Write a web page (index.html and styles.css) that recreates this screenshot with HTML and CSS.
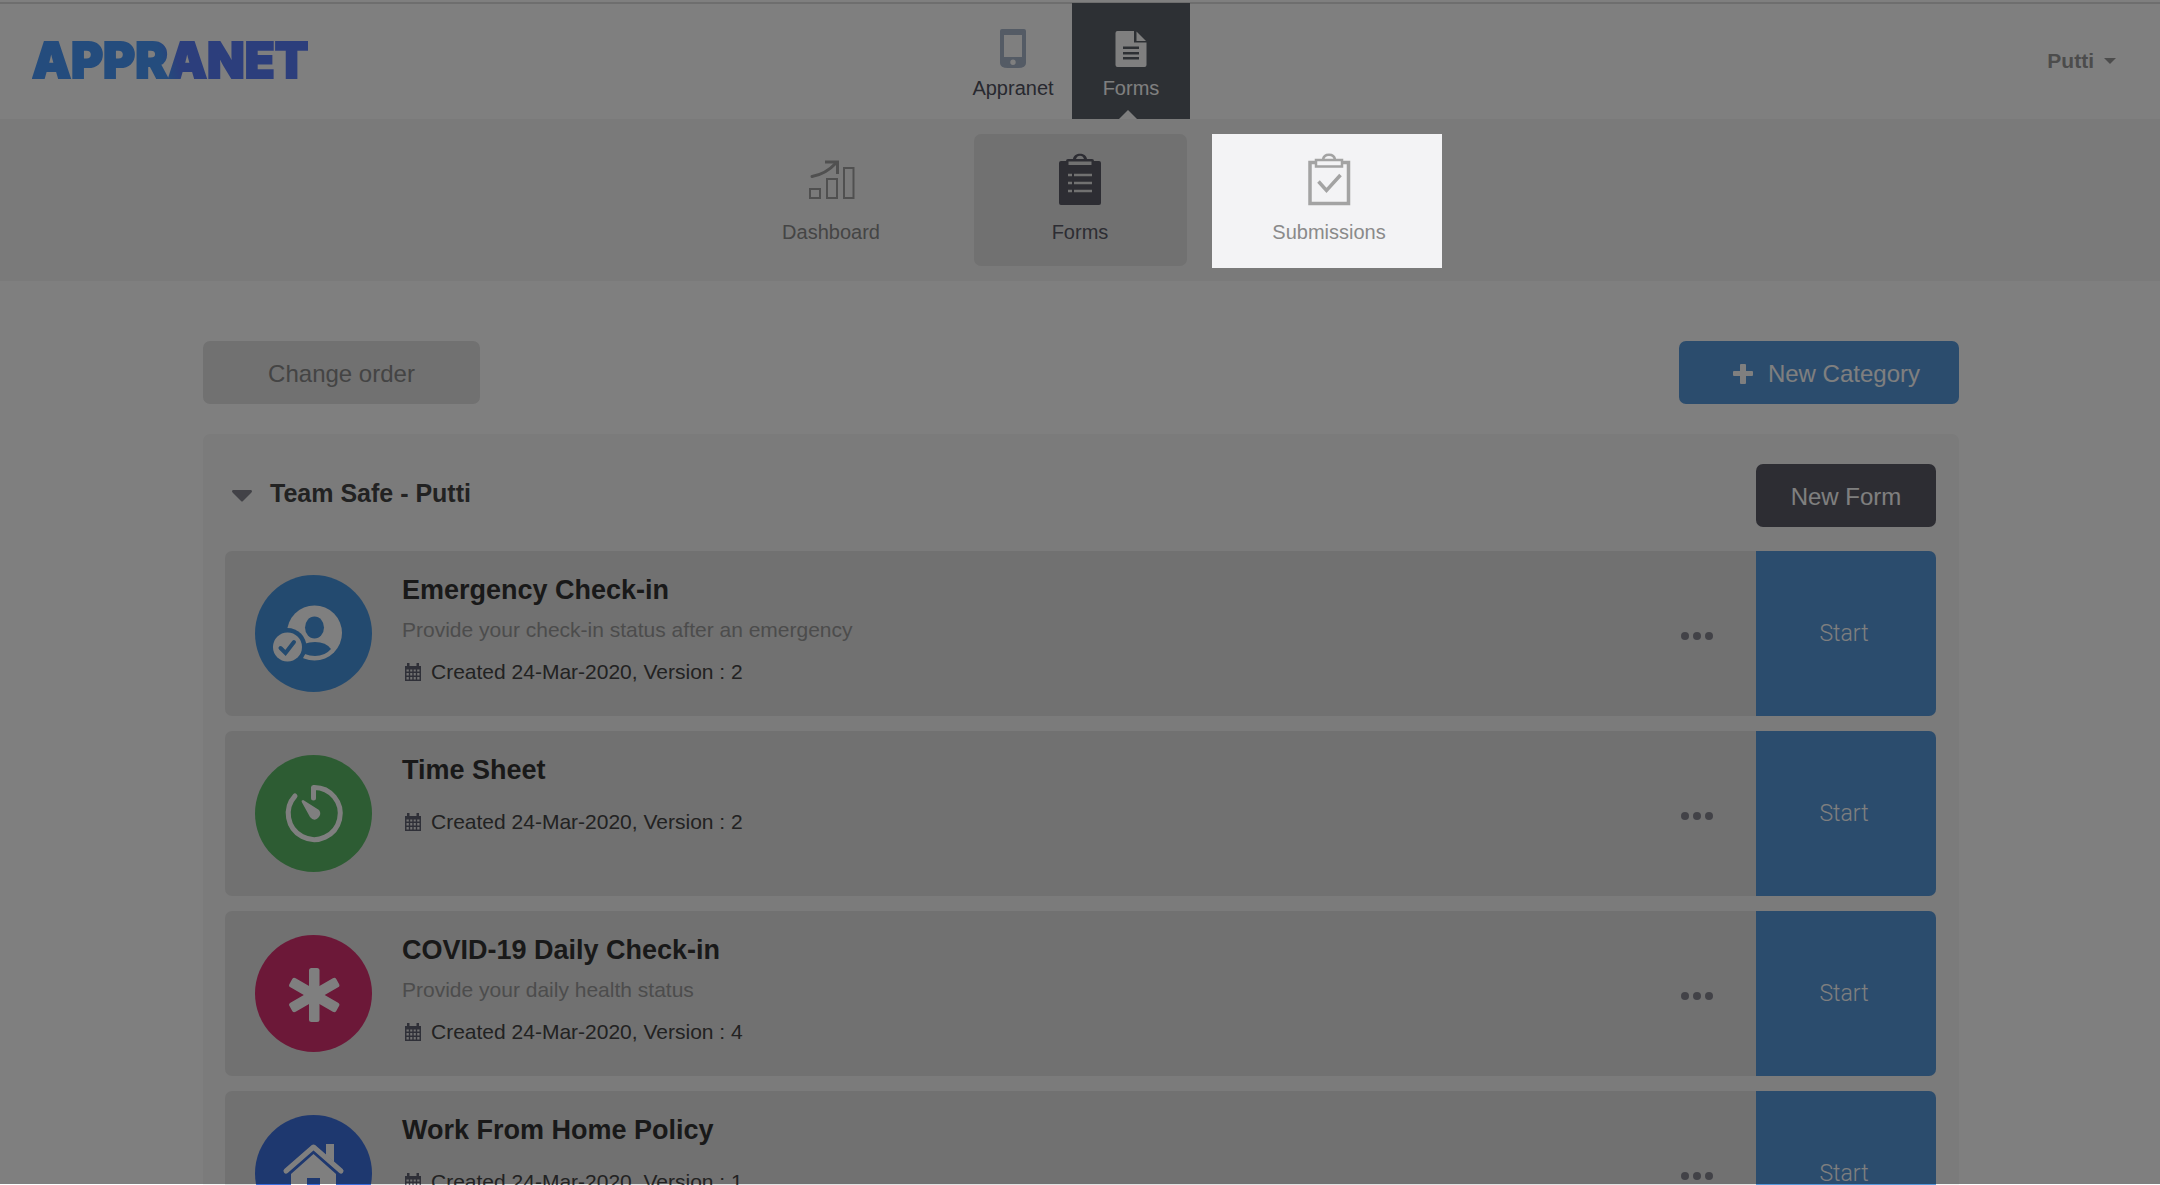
FILE: index.html
```
<!DOCTYPE html>
<html lang="en">

<head>
    <meta charset="utf-8">
    <title>Appranet - Forms</title>
    <link rel="stylesheet" href="styles.css">
</head>

<body>
    <svg class="sprite" aria-hidden="true">
        <symbol id="calendar" viewBox="0 0 16 18">
            <path fill="currentColor" fill-rule="evenodd" d="M0 3h2V0h2.500v3h7V0H14v3h2v15H0zM1.500 6.500v2h2.300v-2zm3.700 0v2h2.100v-2zm3.500 0v2h2.100v-2zm3.500 0v2h2.300v-2zM1.500 10v2.500h2.300V10zm3.700 0v2.500h2.100V10zm3.500 0v2.500h2.100V10zm3.500 0v2.500h2.300V10zM1.500 14v2.500h2.300V14zm3.700 0v2.500h2.100V14zm3.500 0v2.500h2.100V14zm3.500 0v2.500h2.300V14z" />
        </symbol>
        <symbol id="dots" viewBox="0 0 32 8">
            <g fill="currentColor">
                <circle cx="4" cy="4" r="4" />
                <circle cx="16" cy="4" r="4" />
                <circle cx="28" cy="4" r="4" />
            </g>
        </symbol>
    </svg>

    <header class="topbar">
        <a class="logo" href="#"><span class="logo-text">APPRANET</span></a>
        <nav class="apps">
            <a class="app" href="#">
                <svg class="app-icon" viewBox="0 0 26 40">
                    <path fill="#a8b6cb" fill-rule="evenodd" d="M2 0h22a2 2 0 0 1 2 2v32q0 5-8 5H8q-8 0-8-5V2a2 2 0 0 1 2-2zm2 6v22h18V6zm9 24.500a2.700 2.700 0 1 0 0 5.400 2.700 2.700 0 0 0 0-5.400z" />
                </svg>
                Appranet
            </a>
            <a class="app app-active" href="#">
                <svg class="app-icon" viewBox="0 0 32 40">
                    <path fill="#fff" fill-rule="evenodd" d="M2.500 2H19v11.500h12.500V36a2 2 0 0 1-2 2h-27a2 2 0 0 1-2-2V4a2 2 0 0 1 2-2zM8 17.500v2.500h16v-2.500zM8 23v2.500h16V23zm0 5v2.500h16V28z" />
                    <path fill="#fff" d="M21.500 2.500 31 12h-9.500z" />
                </svg>
                Forms
            </a>
        </nav>
        <button class="user" type="button">Putti
            <svg class="user-caret" viewBox="0 0 12 6"><path fill="currentColor" d="M0 0h12L6 6z" /></svg>
        </button>
    </header>

    <nav class="subnav">
        <a class="tile" href="#">
            <svg class="tile-icon" viewBox="0 0 48 56" fill="none" stroke="#a0a0a0" stroke-width="2">
                <path d="M3 36h10v9H3zM20 26h10v19H20zM37 15h9.500v30H37z" />
                <path stroke-width="3" stroke-linecap="round" d="M5 23.500Q19 21 29 10" />
                <path stroke-width="3" d="M18 9h12.500v12" />
            </svg>
            Dashboard
        </a>
        <a class="tile tile-active" href="#">
            <svg class="tile-icon" viewBox="0 0 48 56">
                <path fill="#5a5a66" d="M5 8h5q0-2 2-2h5c1-7 13-7 14 0h5q2 0 2 2h5a2 2 0 0 1 2 2v40a2 2 0 0 1-2 2H5a2 2 0 0 1-2-2V10a2 2 0 0 1 2-2z" />
                <path fill="#e2e2e2" d="M12.500 8.500h23V12h-23zM20 6c1-4.500 7-4.500 8 0z" />
                <path stroke="#e2e2e2" stroke-width="2.500" d="M18 22h18M18 30h18M18 38h18M12 22h4M12 30h4M12 38h4" />
            </svg>
            Forms
        </a>
        <a class="tile tile-spot" href="#">
            <svg class="tile-icon" viewBox="0 0 48 56" fill="none" stroke="#a3a3a3">
                <path stroke-width="3.500" d="M10 9.500H5v41h38.500v-41H38" />
                <path stroke-width="2.500" d="M18 6.500c1-6.500 11-6.500 12 0M11 7h26v6.500H11z" />
                <path stroke-width="3.500" d="M13.500 28.500l8 9 14-15.500" />
            </svg>
            Submissions
        </a>
    </nav>

    <main class="content">
        <div class="toolbar">
            <button class="btn btn-grey" type="button">Change order</button>
            <button class="btn btn-blue" type="button">
                <svg class="plus" viewBox="0 0 20 20"><path fill="currentColor" d="M7 1q0-1 1-1h4q1 0 1 1v6h6q1 0 1 1v3q0 1-1 1h-6v7q0 1-1 1H8q-1 0-1-1v-7H1q-1 0-1-1V8q0-1 1-1h6z" /></svg>
                New Category
            </button>
        </div>

        <section class="panel">
            <div class="panel-head">
                <svg class="panel-caret" viewBox="0 0 20 12"><path fill="#84858f" d="M1 0h18q2 1 0 3l-8 8q-1 1-2 0L1 3q-2-2 0-3z" /></svg>
                <h2 class="panel-title">Team Safe - Putti</h2>
                <button class="btn btn-dark" type="button">New Form</button>
            </div>

            <article class="form-row">
                <svg class="form-icon" viewBox="0 0 117 117">
                    <circle cx="58.500" cy="58.500" r="58.500" fill="#4795de" />
                    <circle cx="59.500" cy="58" r="27.500" fill="#fff" />
                    <ellipse cx="59.500" cy="52.500" rx="9.500" ry="11" fill="#4795de" />
                    <path fill="#4795de" d="M43 74q5-7 17-7 11 0 16 7-6 7-16 7-11 0-17-7z" />
                    <circle cx="32.500" cy="72" r="19" fill="#4795de" />
                    <circle cx="32.500" cy="72" r="14.500" fill="#fff" />
                    <path fill="none" stroke="#4795de" stroke-width="4" stroke-linecap="round" d="M25.500 73l5 5 8.500-11" />
                </svg>
                <div class="form-info">
                    <h3 class="form-title">Emergency Check-in</h3>
                    <p class="form-desc">Provide your check-in status after an emergency</p>
                    <p class="form-meta"><svg class="calendar"><use href="#calendar" /></svg>Created 24-Mar-2020, Version : 2</p>
                </div>
                <button class="more" type="button" aria-label="More"><svg class="dots"><use href="#dots" /></svg></button>
                <button class="start" type="button">Start</button>
            </article>

            <article class="form-row">
                <svg class="form-icon" viewBox="0 0 117 117">
                    <circle cx="58.500" cy="58.500" r="58.500" fill="#5ab866" />
                    <path fill="none" stroke="#fff" stroke-width="5" stroke-linecap="round" stroke-linejoin="round" d="M58.500 43V32.500A26 26 0 1 1 40 41" />
                    <path fill="#fff" d="M47 45.500q-1 0 0 2L55 62q4 5 8 1t1-8L49 45.500q-1-1-2 0z" />
                </svg>
                <div class="form-info">
                    <h3 class="form-title">Time Sheet</h3>
                    <p class="form-meta"><svg class="calendar"><use href="#calendar" /></svg>Created 24-Mar-2020, Version : 2</p>
                </div>
                <button class="more" type="button" aria-label="More"><svg class="dots"><use href="#dots" /></svg></button>
                <button class="start" type="button">Start</button>
            </article>

            <article class="form-row">
                <svg class="form-icon" viewBox="0 0 117 117">
                    <circle cx="58.500" cy="58.500" r="58.500" fill="#d83070" />
                    <g fill="#fff">
                        <rect x="54" y="33" width="10.500" height="54" rx="2.500" />
                        <rect x="54" y="33" width="10.500" height="54" rx="2.500" transform="rotate(60 59.250 60)" />
                        <rect x="54" y="33" width="10.500" height="54" rx="2.500" transform="rotate(120 59.250 60)" />
                    </g>
                </svg>
                <div class="form-info">
                    <h3 class="form-title">COVID-19 Daily Check-in</h3>
                    <p class="form-desc">Provide your daily health status</p>
                    <p class="form-meta"><svg class="calendar"><use href="#calendar" /></svg>Created 24-Mar-2020, Version : 4</p>
                </div>
                <button class="more" type="button" aria-label="More"><svg class="dots"><use href="#dots" /></svg></button>
                <button class="start" type="button">Start</button>
            </article>

            <article class="form-row">
                <svg class="form-icon" viewBox="0 0 117 117">
                    <circle cx="58.500" cy="58.500" r="58.500" fill="#3d70de" />
                    <path fill="none" stroke="#fff" stroke-width="5" stroke-linecap="round" stroke-linejoin="round" d="M31 56l27.500-24L86 56" />
                    <path fill="#fff" d="M71 29h8v18l-8-7zM36 59l22.500-20L81 59v25H65V63H52v21H36z" />
                </svg>
                <div class="form-info">
                    <h3 class="form-title">Work From Home Policy</h3>
                    <p class="form-meta"><svg class="calendar"><use href="#calendar" /></svg>Created 24-Mar-2020, Version : 1</p>
                </div>
                <button class="more" type="button" aria-label="More"><svg class="dots"><use href="#dots" /></svg></button>
                <button class="start" type="button">Start</button>
            </article>
        </section>
    </main>

    <div class="overlay"></div>
</body>

</html>
```
FILE: styles.css
```
* {
    box-sizing: border-box;
}
body {
    margin: 0;
    height: 100vh;
    overflow: hidden;
    background: #fff;
    font-family: "Liberation Sans", Arial, sans-serif;
    color: #444;
}
a {
    color: inherit;
    text-decoration: none;
}
button {
    border: none;
    background: none;
    padding: 0;
    font-family: inherit;
    color: inherit;
    cursor: pointer;
}
h2, h3, p {
    margin: 0;
}
svg {
    display: block;
}
.sprite {
    display: none;
}

/* top bar */
.topbar {
    height: 119px;
    display: grid;
    grid-template-columns: 1fr auto 1fr;
    padding: 3px 44px 0 28px;
    box-shadow: inset 0 2px 0 #fff, inset 0 4px 0 #dcdcdc;
}
.logo {
    align-self: center;
    justify-self: start;
    padding-left: 4px;
}
.logo-text {
    font-family: Inter, sans-serif;
    font-size: 49px;
    line-height: 60px;
    font-weight: 900;
    color: transparent;
    background: linear-gradient(75deg, #4898fa 47%, #587cf8 53%);
    background-clip: text;
    -webkit-background-clip: text;
    -webkit-text-stroke: 2px transparent;
}
.apps {
    display: flex;
    justify-content: center;
}
.app {
    position: relative;
    width: 118px;
    display: flex;
    flex-direction: column;
    align-items: center;
    gap: 7px;
    padding-top: 26px;
    font-size: 20px;
    line-height: 24px;
    color: #50525f;
}
.app-icon {
    height: 40px;
}
.app-active {
    background: #5a6068;
    color: #fff;
}
.app-active::after {
    content: "";
    position: absolute;
    bottom: 0;
    left: 47px;
    border: 9px solid transparent;
    border-top: none;
    border-bottom-color: #fff;
}
.user {
    justify-self: end;
    display: flex;
    align-items: center;
    gap: 10px;
    font-size: 21px;
    font-weight: bold;
    color: #999;
}
.user-caret {
    width: 12px;
    height: 6px;
}

/* sub navigation */
.subnav {
    height: 162px;
    display: flex;
    justify-content: center;
    gap: 36px;
    padding-top: 15px;
    background: #f5f5f5;
}
.tile {
    width: 213px;
    height: 132px;
    display: flex;
    flex-direction: column;
    align-items: center;
    gap: 11px;
    padding-top: 19px;
    border-radius: 7px;
    font-size: 20px;
    line-height: 24px;
    color: #8a8a8a;
}
.tile-icon {
    width: 48px;
    height: 56px;
}
.tile-active {
    background: #e2e2e2;
    color: #5a5a66;
}
.tile-spot {
    position: relative;
    z-index: 11;
}
.tile-spot::before {
    content: "";
    position: absolute;
    z-index: -1;
    inset: 0 -6px -2px -11px;
    background: #f3f3f5;
}

/* content */
.content {
    margin: 60px 201px 0 203px;
}
.toolbar {
    display: flex;
    justify-content: space-between;
    margin-bottom: 30px;
}
.btn {
    height: 63px;
    padding-top: 2px;
    border-radius: 7px;
    font-size: 24px;
}
.btn-grey {
    width: 277px;
    background: #e2e2e2;
    color: #888;
}
.btn-blue {
    display: flex;
    align-items: center;
    gap: 15px;
    padding: 2px 39px 0 54px;
    background: #5698da;
    color: #fff;
}
.btn-dark {
    width: 180px;
    background: #5a5a66;
    color: #fff;
}
.plus {
    width: 20px;
    height: 20px;
}
.panel {
    padding: 30px 23px 15px 22px;
    border-radius: 7px;
    background: #f6f6f6;
}
.panel-head {
    display: flex;
    align-items: center;
    margin-bottom: 24px;
    padding-left: 7px;
}
.panel-caret {
    width: 20px;
    height: 12px;
}
.panel-title {
    flex: 1;
    margin-left: 18px;
    font-size: 25px;
    line-height: 30px;
    padding-bottom: 6px;
}
.form-row {
    height: 165px;
    display: flex;
    margin-bottom: 15px;
    padding-left: 30px;
    border-radius: 7px;
    background: #e2e2e2;
    overflow: hidden;
}
.form-icon {
    width: 117px;
    height: 117px;
    margin-top: 24px;
}
.form-info {
    flex: 1;
    margin: 23px 0 0 30px;
}
.form-title {
    font-size: 27px;
    line-height: 32px;
    color: #333;
}
.form-desc {
    padding-top: 12px;
    margin-bottom: -6px;
    font-size: 21px;
    line-height: 24px;
    color: #999;
}
.form-meta {
    display: flex;
    align-items: center;
    gap: 10px;
    padding: 24px 0 0 3px;
    font-size: 21px;
    line-height: 24px;
}
.calendar {
    width: 16px;
    height: 18px;
    color: #5f6070;
}
.more {
    width: 118px;
    padding-top: 4px;
    color: #84858f;
}
.dots {
    width: 32px;
    height: 8px;
    margin: 0 auto;
}
.start {
    width: 180px;
    padding-right: 4px;
    background: #5698da;
    font-family: Roboto, sans-serif;
    font-size: 23px;
    font-weight: 300;
    color: #fff;
}

/* dimmed layer over everything but the highlighted tile */
.overlay {
    position: fixed;
    inset: 0 0 1px;
    z-index: 10;
    background: rgba(0, 0, 0, 0.5);
}
```
